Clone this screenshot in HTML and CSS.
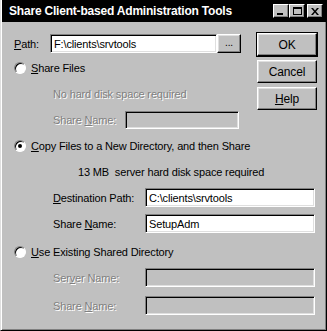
FILE: index.html
```html
<!DOCTYPE html>
<html lang="en">
   <head>
      <meta charset="UTF-8">
      <title>Share Client-based Administration Tools</title>
      <link rel="stylesheet" href="styles.css">
   </head>
   <body>
      <div class="window">
         <div class="titlebar">
            <span class="title">Share Client-based Administration Tools</span>
            <div class="caption-btns">
               <span class="cap-btn"><span class="min-glyph"></span></span>
               <span class="cap-btn"><span class="max-glyph"></span></span>
               <span class="cap-btn close-btn">
                  <svg width="8" height="7" viewBox="0 0 8 7">
                     <path d="M0 0h2l2 2.5 2-2.5h2l-3 3.5 3 3.5h-2l-2-2.5-2 2.5h-2l3-3.5z" fill="#000"/>
                  </svg>
               </span>
            </div>
         </div>
         <div class="content">
            <div class="top">
               <div class="top-left">
                  <div class="path-row">
                     <span class="path-label"><u>P</u>ath:</span>
                     <span class="field path-field">F:\clients\srvtools</span>
                     <span class="btn browse-btn">...</span>
                  </div>
                  <div class="radio-row row-share">
                     <span class="radio"></span>
                     <span><u>S</u>hare Files</span>
                  </div>
                  <div class="note disabled row-nodisk">No hard disk space required</div>
                  <div class="field-row row-sharename1">
                     <span class="label short-label disabled">Share <u>N</u>ame:</span>
                     <span class="field field-off short-field"></span>
                  </div>
               </div>
               <div class="btns">
                  <span class="btn default-btn">OK</span>
                  <span class="btn">Cancel</span>
                  <span class="btn"><u>H</u>elp</span>
               </div>
            </div>
            <div class="radio-row row-copy">
               <span class="radio checked"></span>
               <span><u>C</u>opy Files to a New Directory, and then Share</span>
            </div>
            <div class="note row-size">13 MB&nbsp; server hard disk space required</div>
            <div class="field-row row-dest">
               <span class="label"><u>D</u>estination Path:</span>
               <span class="field wide-field">C:\clients\srvtools</span>
            </div>
            <div class="field-row row-sharename2">
               <span class="label">Share <u>N</u>ame:</span>
               <span class="field wide-field">SetupAdm</span>
            </div>
            <div class="radio-row row-use">
               <span class="radio"></span>
               <span><u>U</u>se Existing Shared Directory</span>
            </div>
            <div class="field-row row-server">
               <span class="label disabled">Ser<u>v</u>er Name:</span>
               <span class="field field-off wide-field"></span>
            </div>
            <div class="field-row row-sharename3">
               <span class="label disabled">Share <u>N</u>ame:</span>
               <span class="field field-off wide-field"></span>
            </div>
         </div>
      </div>
   </body>
</html>
```

FILE: styles.css
```css
body {
   margin: 0;
   background: #c0c0c0;
   font-family: "Liberation Sans", Arial, sans-serif;
   font-size: 11px;
   letter-spacing: -0.15px;
   color: #000;
}
.window {
   width: 327px;
   height: 331px;
   box-sizing: border-box;
   background: #c0c0c0;
   border-left: 1px solid #dfdfdf;
   border-right: 1px solid #000;
   border-bottom: 1px solid #000;
   box-shadow: inset 1px 0 #fff, inset -1px -1px #808080;
   padding: 0 2px 2px 2px;
   display: flex;
   flex-direction: column;
}
.titlebar {
   height: 22px;
   background: #000;
   margin: 0 -2px 0 -1px;
   display: flex;
   align-items: center;
   justify-content: space-between;
   padding: 0 3px 0 7px;
   color: #fff;
}
.title {
   font-weight: bold;
   font-size: 12px;
   letter-spacing: -0.2px;
}
.caption-btns {
   display: flex;
}
.cap-btn {
   width: 16px;
   height: 14px;
   box-sizing: border-box;
   background: #c0c0c0;
   border: 1px solid;
   border-color: #fff #000 #000 #fff;
   box-shadow: inset -1px -1px #808080;
   display: flex;
   align-items: center;
   justify-content: center;
}
.close-btn {
   margin-left: 2px;
}
.min-glyph {
   width: 6px;
   height: 2px;
   background: #000;
   margin-top: 6px;
   margin-left: -2px;
}
.max-glyph {
   width: 9px;
   height: 8px;
   box-sizing: border-box;
   border: 1px solid #000;
   border-top-width: 2px;
}
.content {
   padding: 0 7px 0 11px;
}
.top {
   display: flex;
}
.top-left {
   flex: 1;
}
.path-row {
   display: flex;
   align-items: center;
   margin-top: 12px;
   height: 19px;
}
.path-label {
   width: 36px;
}
.field {
   display: flex;
   align-items: center;
   box-sizing: border-box;
   height: 19px;
   padding: 0 3px;
   background: #fff;
   border: 1px solid;
   border-color: #808080 #fff #fff #808080;
   box-shadow: inset 1px 1px #000, inset -1px -1px #dfdfdf;
   white-space: nowrap;
}
.field-off {
   background: #c0c0c0;
}
.path-field {
   width: 167px;
}
.btn {
   display: flex;
   align-items: center;
   justify-content: center;
   box-sizing: border-box;
   background: #c0c0c0;
   border: 1px solid;
   border-color: #fff #000 #000 #fff;
   box-shadow: inset -1px -1px #808080, inset 1px 1px #dfdfdf;
}
.browse-btn {
   width: 24px;
   height: 19px;
   font-size: 10px;
   padding-bottom: 2px;
}
.btns {
   width: 60px;
   margin-top: 11px;
   margin-left: 15px;
   display: flex;
   flex-direction: column;
   gap: 4px;
}
.btns .btn {
   height: 23px;
   font-size: 12px;
}
.default-btn {
   outline: 1px solid #000;
}
.radio-row {
   display: flex;
   align-items: center;
   height: 16px;
   gap: 5px;
}
.radio {
   width: 12px;
   height: 12px;
   box-sizing: border-box;
   border-radius: 50%;
   background: #fff;
   border: 1px solid;
   border-color: #808080 #fff #fff #808080;
   box-shadow: inset 1px 1px #000;
   display: flex;
   align-items: center;
   justify-content: center;
}
.radio.checked::after {
   content: "";
   width: 4px;
   height: 4px;
   border-radius: 50%;
   background: #000;
}
.note {
   height: 16px;
   line-height: 16px;
}
.disabled {
   color: #808080;
   text-shadow: 1px 1px #fff;
}
.field-row {
   display: flex;
   align-items: center;
}
.label {
   width: 92px;
   padding-left: 39px;
   flex: none;
}
.short-label {
   width: 72px;
}
.short-field {
   width: 114px;
}
.wide-field {
   width: 170px;
}
.row-share { margin-top: 7px; }
.row-nodisk { margin-top: 10px; padding-left: 39px; }
.row-sharename1 { margin-top: 9px; }
.row-sharename1 .field { height: 18px; }
.row-copy { margin-top: 9px; }
.row-size { margin-top: 10px; padding-left: 64px; }
.row-dest { margin-top: 8px; }
.row-sharename2 { margin-top: 7px; }
.row-use { margin-top: 11px; }
.row-server { margin-top: 8px; }
.row-sharename3 { margin-top: 9px; }
```
